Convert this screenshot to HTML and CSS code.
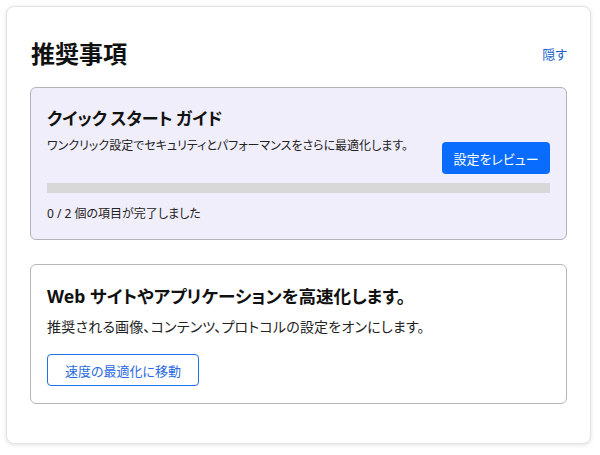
FILE: index.html
```html
<!DOCTYPE html>
<html lang="ja">
<head>
<meta charset="utf-8">
<link rel="stylesheet" href="styles.css">
</head>
<body>
<section class="panel">
  <header class="panel-head">
    <h1 class="panel-title">推奨事項</h1>
    <a class="hide-link" href="#">隠す</a>
  </header>
  <div class="card card-guide">
    <h2 class="card-title guide-title">クイック スタート ガイド</h2>
    <div class="guide-row">
      <p class="card-desc small">ワンクリック設定でセキュリティとパフォーマンスをさらに最適化します。</p>
      <button class="btn btn-primary">設定をレビュー</button>
    </div>
    <div class="progress"><div class="progress-fill" style="width:0%"></div></div>
    <p class="progress-text">0 / 2 個の項目が完了しました</p>
  </div>
  <div class="card card-speed">
    <h2 class="card-title">Web サイトやアプリケーションを高速化します。</h2>
    <p class="card-desc">推奨される画像、コンテンツ、プロトコルの設定をオンにします。</p>
    <button class="btn btn-outline">速度の最適化に移動</button>
  </div>
</section>
</body>
</html>
```
FILE: styles.css
```css
* { box-sizing: border-box; }
html, body { margin: 0; padding: 0; background: #ffffff; }
body {
  font-family: "Noto Sans", "Noto Sans CJK JP", sans-serif;
  font-feature-settings: "palt";
  color: #1b1b1b;
  padding: 6px 9px 11px 6px;
}
.panel {
  width: 585px;
  height: 438px;
  border: 1px solid #e2e2e2;
  border-radius: 8px;
  box-shadow: 0 1px 4px rgba(0,0,0,0.12);
  padding: 0 23px;
  background: #fff;
}
.panel-head {
  display: flex;
  justify-content: space-between;
  align-items: flex-start;
  padding-top: 31px;
  height: 80px;
}
.panel-title {
  margin: 0 0 0 1px;
  font-size: 24px;
  font-weight: 700;
  line-height: 32px;
  color: #111;
}
.hide-link {
  margin-top: 6px;
  font-size: 13px;
  line-height: 20px;
  color: #1a62c8;
  text-decoration: none;
}
.card {
  border: 1px solid #b6b6b8;
  border-radius: 6px;
  padding: 18px 16px 16px;
}
.card-guide {
  background: #f0eefa;
  border-color: #b4b3bc;
  height: 153px;
  margin-bottom: 24px;
}
.card-speed {
  padding-bottom: 17px;
}
.card-title {
  margin: 0;
  font-size: 17.6px;
  font-weight: 700;
  line-height: 26px;
  color: #111;
}
.guide-title {
  font-size: 17px;
  word-spacing: -1px;
}
.guide-row {
  display: flex;
  justify-content: space-between;
  align-items: flex-start;
  margin-top: 4px;
}
.card-desc {
  margin: 8px 0 0;
  font-size: 14px;
  letter-spacing: 0.2px;
  line-height: 20px;
  color: #222;
}
.card-desc.small {
  margin: 0;
  font-size: 12px;
  letter-spacing: 0;
  line-height: 20px;
}
.btn {
  font-family: inherit;
  font-feature-settings: "palt";
  font-size: 13px;
  height: 32px;
  border-radius: 4px;
  padding: 0;
  cursor: pointer;
}
.btn-primary {
  margin-top: 6px;
  background: #0a6cff;
  color: #fff;
  border: none;
  width: 108px;
}
.btn-outline {
  margin-top: 17px;
  background: #fff;
  color: #2a6be0;
  border: 1px solid #1f6fe8;
  width: 152px;
}
.progress {
  margin-top: 9px;
  height: 10px;
  background: #d8d8d8;
}
.progress-fill { height: 100%; background: #0a6cff; }
.progress-text {
  margin: 12px 0 0;
  font-size: 12px;
  line-height: 18px;
  color: #222;
}
```
